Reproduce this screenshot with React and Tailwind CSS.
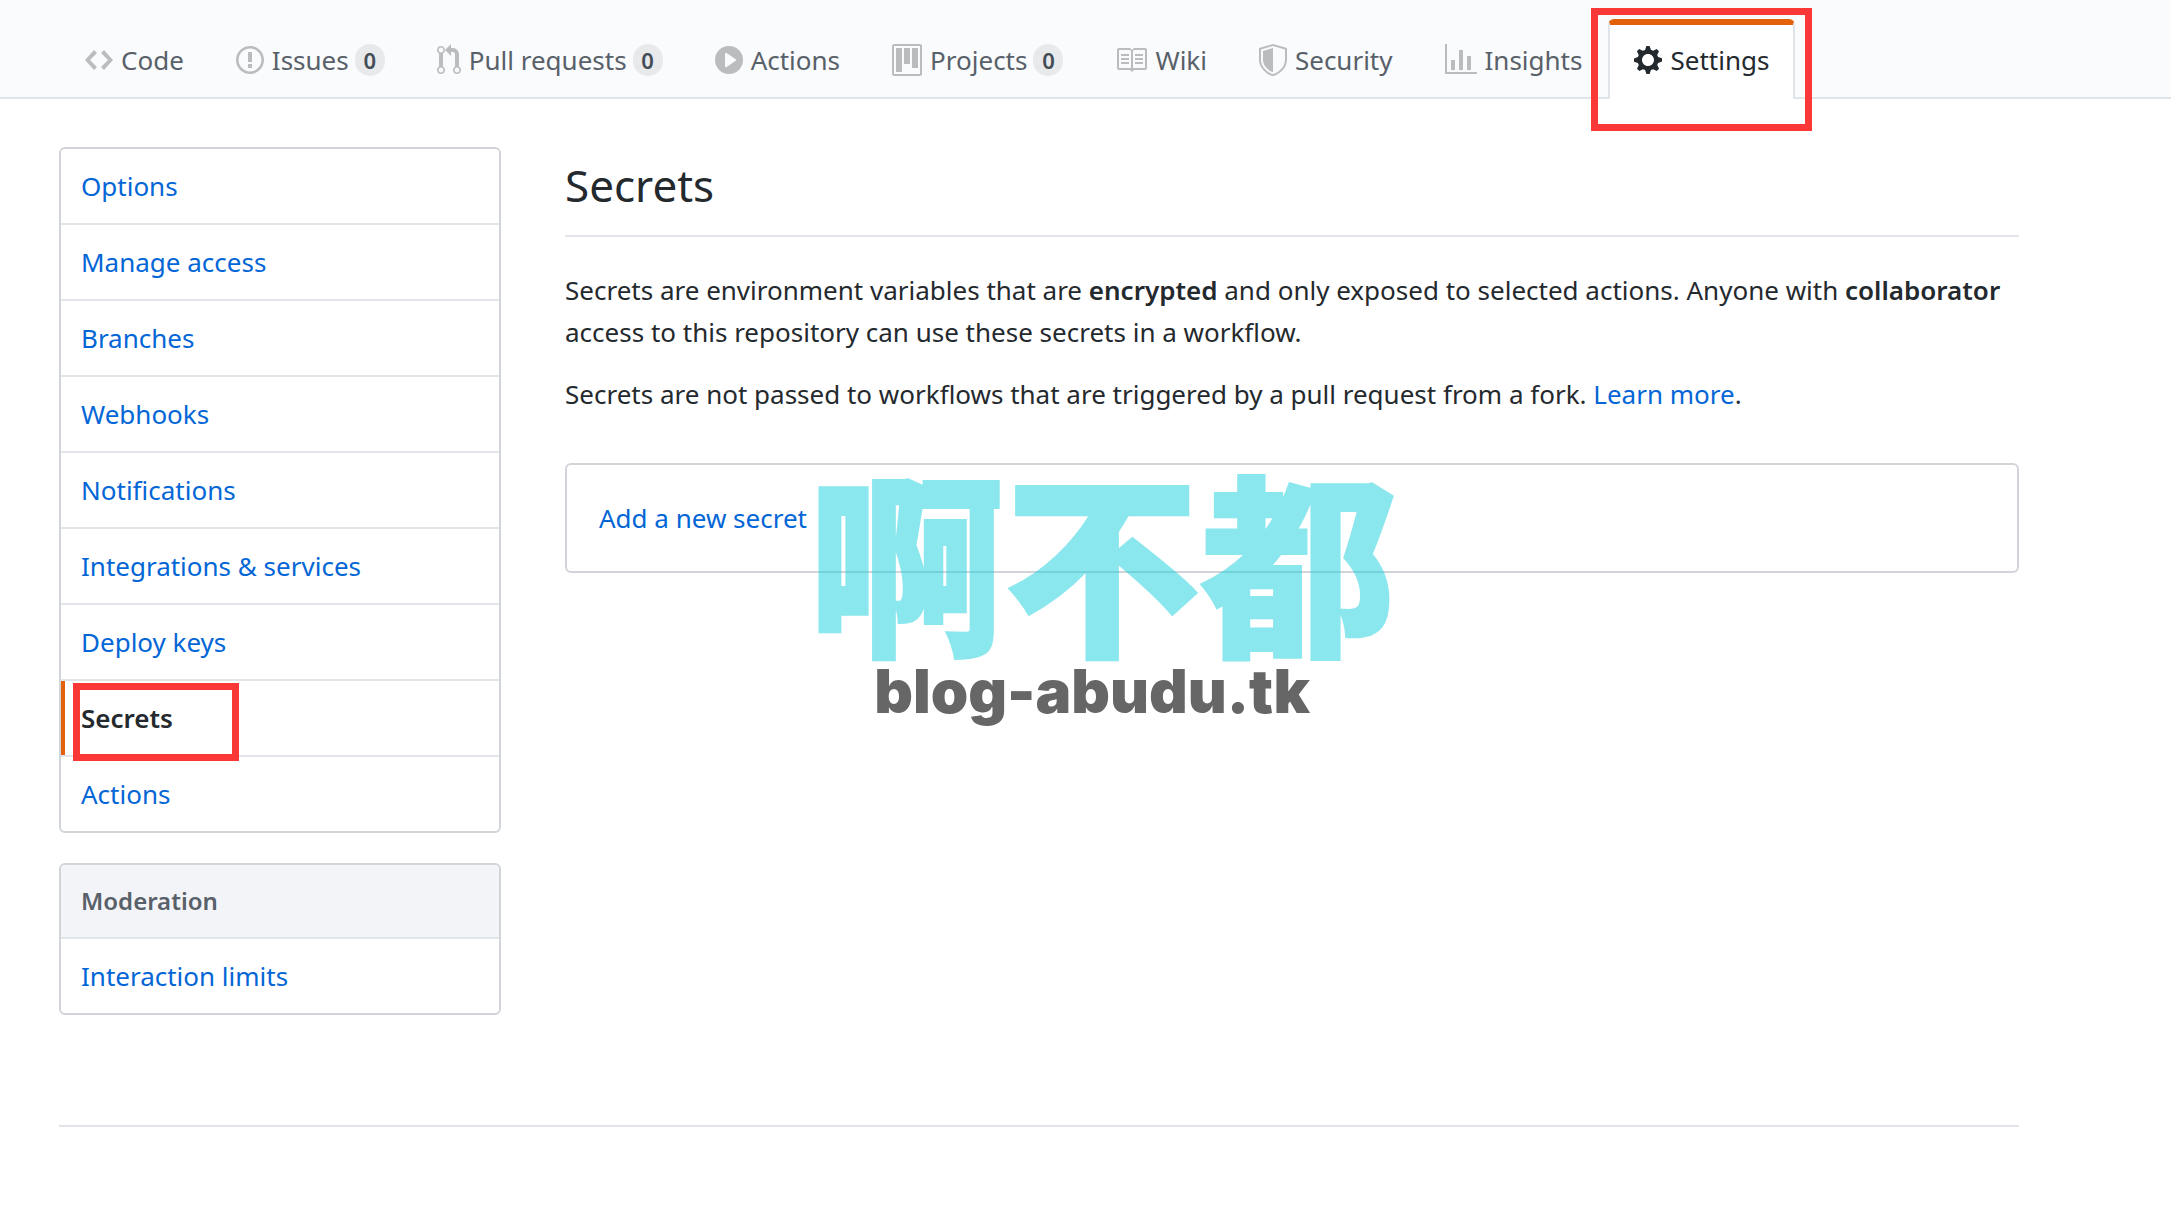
import React from "react";

const ICONS = {
  code: {
    w: 14,
    d: "M9.5 3L8 4.5 11.5 8 8 11.5 9.5 13 14 8 9.5 3zm-5 0L0 8l4.5 5L6 11.5 2.5 8 6 4.5 4.5 3z",
  },
  issue: {
    w: 14,
    d: "M7 2.3c3.14 0 5.7 2.56 5.7 5.7s-2.56 5.7-5.7 5.7A5.71 5.71 0 011.3 8c0-3.14 2.56-5.7 5.7-5.7zM7 1C3.14 1 0 4.14 0 8s3.14 7 7 7 7-3.14 7-7-3.14-7-7-7zm1 3H6v5h2V4zm0 6H6v2h2v-2z",
  },
  pull: {
    w: 12,
    d: "M11 11.28V5c-.03-.78-.34-1.47-.94-2.06C9.46 2.35 8.78 2.03 8 2H7V0L4 3l3 3V4h1c.27.02.48.11.69.31.21.2.3.42.31.69v6.28A1.993 1.993 0 0010 15a1.993 1.993 0 001-3.72zm-1 2.92c-.66 0-1.2-.55-1.2-1.2 0-.65.55-1.2 1.2-1.2.65 0 1.2.55 1.2 1.2 0 .65-.55 1.2-1.2 1.2zM4 3c0-1.11-.89-2-2-2a1.993 1.993 0 00-1 3.72v6.56A1.993 1.993 0 002 15a1.993 1.993 0 001-3.72V4.72c.59-.34 1-.98 1-1.72zm-.8 10c0 .66-.55 1.2-1.2 1.2-.65 0-1.2-.55-1.2-1.2 0-.65.55-1.2 1.2-1.2.65 0 1.2.55 1.2 1.2zM2 4.2C1.34 4.2.8 3.65.8 3c0-.65.55-1.2 1.2-1.2.65 0 1.2.55 1.2 1.2 0 .65-.55 1.2-1.2 1.2z",
  },
  play: {
    w: 14,
    d: "M14 8A7 7 0 110 8a7 7 0 0114 0zm-8.223 3.482l4.599-3.066a.5.5 0 000-.832L5.777 4.518A.5.5 0 005 4.934v6.132a.5.5 0 00.777.416z",
  },
  project: {
    w: 15,
    d: "M10 12h3V2h-3v10zm-4-2h3V2H6v8zm-4 4h3V2H2v12zm-1 1h13V1H1v14zM14 0H1a1 1 0 00-1 1v14a1 1 0 001 1h13a1 1 0 001-1V1a1 1 0 00-1-1z",
  },
  book: {
    w: 16,
    d: "M3 5h4v1H3V5zm0 3h4V7H3v1zm0 2h4V9H3v1zm11-5h-4v1h4V5zm0 2h-4v1h4V7zm0 2h-4v1h4V9zm2-6v9c0 .55-.45 1-1 1H9.5l-1 1-1-1H2c-.55 0-1-.45-1-1V3c0-.55.45-1 1-1h5.5l1 1 1-1H15c.55 0 1 .45 1 1zm-8 .5L7.5 3H2v9h6V3.5zm7-.5H9.5l-.5.5V12h6V3z",
  },
  shield: {
    w: 14,
    d: "M0 2l7-2 7 2v6.02C14 12.69 8.69 16 7 16c-1.69 0-7-3.31-7-7.98V2zm1 .75L7 1l6 1.75v5.268C13 12.104 8.449 15 7 15c-1.449 0-6-2.896-6-6.982V2.75zm1 .75L7 2v12c-1.207 0-5-2.482-5-5.985V3.5z",
  },
  graph: {
    w: 16,
    d: "M16 14v1H0V0h1v14h15zM5 13H3V8h2v5zm4 0H7V3h2v10zm4 0h-2V6h2v7z",
  },
  gear: {
    w: 14,
    d: "M14 8.77v-1.6l-1.94-.64-.45-1.09.88-1.84-1.13-1.13-1.81.91-1.09-.45-.69-1.92h-1.6l-.63 1.94-1.11.45-1.84-.88-1.13 1.13.91 1.81-.45 1.09L0 7.23v1.59l1.94.64.45 1.09-.88 1.84 1.13 1.13 1.81-.91 1.09.45.69 1.92h1.59l.63-1.94 1.11-.45 1.84.88 1.13-1.13-.92-1.81.47-1.09L14 8.75v.02zM7 11c-1.66 0-3-1.34-3-3s1.34-3 3-3 3 1.34 3 3-1.34 3-3 3z",
  },
};

function Icon({ name, className }) {
  const { w, d } = ICONS[name];
  return (
    <svg
      aria-hidden="true"
      viewBox={`0 0 ${w} 16`}
      width={w * 2}
      height={32}
      fill="currentColor"
      fillRule="evenodd"
      className={`shrink-0 ${className}`}
    >
      <path d={d} />
    </svg>
  );
}

const TABS = [
  { icon: "code", label: "Code" },
  { icon: "issue", label: "Issues", count: 0 },
  { icon: "pull", label: "Pull requests", count: 0 },
  { icon: "play", label: "Actions" },
  { icon: "project", label: "Projects", count: 0 },
  { icon: "book", label: "Wiki" },
  { icon: "shield", label: "Security" },
  { icon: "graph", label: "Insights" },
  { icon: "gear", label: "Settings", current: true },
];

const MENU = [
  "Options",
  "Manage access",
  "Branches",
  "Webhooks",
  "Notifications",
  "Integrations & services",
  "Deploy keys",
  "Secrets",
  "Actions",
];

function Tab({ icon, label, count, current }) {
  return (
    <a
      href="#"
      aria-current={current ? "page" : undefined}
      className={
        current
          ? "relative -mb-0.5 flex items-center gap-2 rounded-t-md border-x-2 border-t-6 border-x-[#e1e4e8] border-t-[#e36209] bg-white px-6 pb-1 text-[#24292e]"
          : "flex items-center gap-2 border-x-2 border-t-6 border-transparent px-6 pb-0.5 whitespace-nowrap text-[#586069]"
      }
    >
      <Icon name={icon} className={current ? "text-[#24292e]" : "text-[#babcbe]"} />
      <span>{label}</span>
      {count !== undefined && (
        <span className="-ml-0.5 flex h-8 w-[30px] items-center justify-center rounded-full bg-[#e8e9eb] text-[22px] font-semibold text-[#444d56]">
          {count}
        </span>
      )}
      {current && (
        <span
          aria-hidden="true"
          className="pointer-events-none absolute -inset-x-[19px] -top-[17px] -bottom-8 border-7 border-[#fb3838]"
        />
      )}
    </a>
  );
}

function MenuItem({ label }) {
  const current = label === "Secrets";
  return (
    <li className="border-b-2 border-[#e1e4e8] last:border-b-0">
      <a
        href="#"
        aria-current={current ? "page" : undefined}
        className={
          current
            ? "relative block border-l-4 border-[#e36209] py-4 pr-5 pl-4 font-semibold text-[#24292e]"
            : "block px-5 py-4 text-[#0366d6]"
        }
      >
        {label}
        {current && (
          <span
            aria-hidden="true"
            className="pointer-events-none absolute top-0.5 -bottom-1.5 left-2 w-[166px] border-7 border-[#fb3838]"
          />
        )}
      </a>
    </li>
  );
}

export default function App() {
  return (
    <div className="min-h-screen bg-white font-['Noto_Sans','Open_Sans',sans-serif] text-[26px] leading-[42px] text-[#24292e]">
      <header className="border-b-2 border-[#e1e4e8] bg-[#fafbfc] pt-[19px] pl-[59px]">
        <nav aria-label="Repository" className="flex h-[78px]">
          {TABS.map((tab) => (
            <Tab key={tab.label} {...tab} />
          ))}
        </nav>
      </header>

      <div className="mr-[152px] ml-[59px]">
        <div className="flex gap-16 pt-12">
          <aside className="w-[442px] shrink-0">
            <nav aria-label="Settings" className="rounded-md border-2 border-[#d1d5da]">
              <ul>
                {MENU.map((label) => (
                  <MenuItem key={label} label={label} />
                ))}
              </ul>
            </nav>
            <nav
              aria-labelledby="moderation"
              className="mt-[30px] overflow-hidden rounded-md border-2 border-[#d1d5da]"
            >
              <h2
                id="moderation"
                className="border-b-2 border-[#e1e4e8] bg-[#f3f4f8] px-5 py-[15px] text-[24px] font-semibold text-[#586069]"
              >
                Moderation
              </h2>
              <ul>
                <MenuItem label="Interaction limits" />
              </ul>
            </nav>
          </aside>

          <main className="relative min-w-0 flex-1">
            <h1 className="border-b-2 border-[#e1e4e8] pt-1.5 pb-[18px] text-[44px] leading-[64px]">Secrets</h1>
            <p className="mt-8">
              Secrets are environment variables that are <strong className="font-semibold">encrypted</strong> and only
              exposed to selected actions. Anyone with <strong className="font-semibold">collaborator</strong> access to
              this repository can use these secrets in a workflow.
            </p>
            <p className="mt-5">
              Secrets are not passed to workflows that are triggered by a pull request from a fork.{" "}
              <a href="#" className="text-[#0366d6]">
                Learn more
              </a>
              .
            </p>
            <div className="mt-12 rounded-md border-2 border-[#d1d5da] px-8 py-8">
              <a href="#" className="text-[#0366d6]">
                Add a new secret
              </a>
            </div>
            <div
              aria-hidden="true"
              className="pointer-events-none absolute top-[314px] left-[243px] flex flex-col items-center whitespace-nowrap"
            >
              <span className="font-['Noto_Sans_CJK_SC',sans-serif] text-[196px] leading-[190px] font-black text-[#1ad0de] opacity-50 [-webkit-text-stroke:2px_#1ad0de]">
                啊不都
              </span>
              <span className="mt-2 mr-5 font-['Inter',sans-serif] text-[60px] leading-[64px] font-black text-[#666666]">
                blog-abudu.tk
              </span>
            </div>
          </main>
        </div>
        <hr className="mt-[110px] border-t-2 border-[#e1e4e8]" />
      </div>
    </div>
  );
}
